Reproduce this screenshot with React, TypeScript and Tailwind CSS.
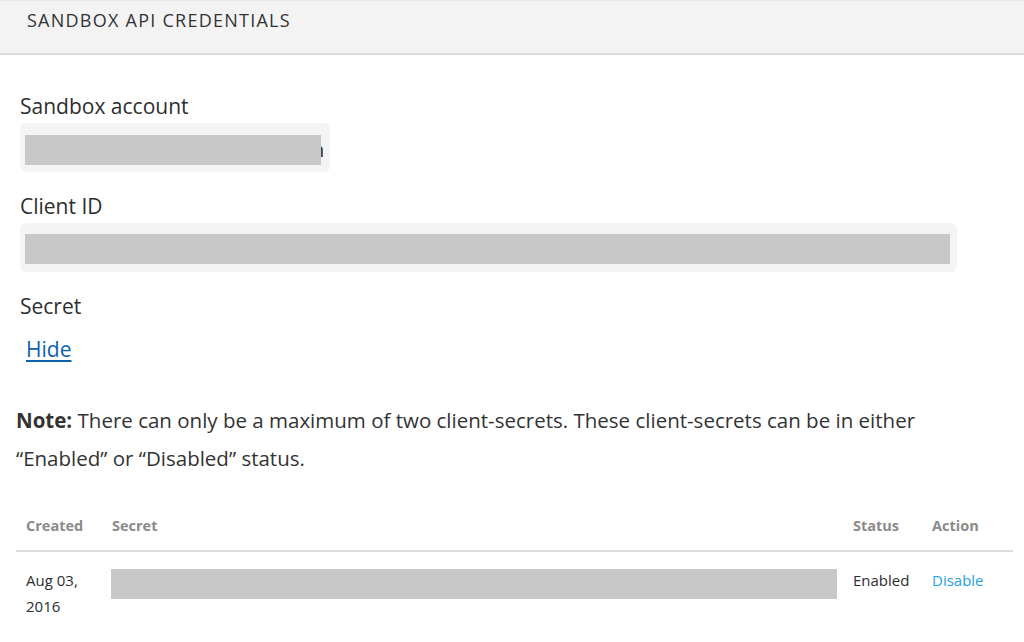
import React from "react";

export default function App() {
  const font = { fontFamily: '"Open Sans", "Liberation Sans", sans-serif' };
  return (
    <div className="w-[1024px] h-[642px] overflow-hidden bg-white text-[#2c2e2f]" style={font}>
      <div className="h-[55px] bg-[#f3f3f3] border-t border-[#e6e6e6] border-b-2 border-b-[#dcdcdc] pl-[27px] pt-[6px]">
        <div className="text-[18px] leading-[26px] text-[#333] tracking-[1.25px]">SANDBOX API CREDENTIALS</div>
      </div>
      <div className="pl-[20px] pt-[37px]">
        <div className="text-[21px] leading-[28px]">Sandbox account</div>
        <div className="mt-[3px] w-[310px] h-[49px] bg-[#f4f4f4] rounded-[6px] pl-[5px] pt-[12px] flex items-start">
          <div className="w-[296px] h-[30px] bg-[#c8c8c8]" />
          <div className="w-[3px] overflow-hidden text-[20px] leading-[30px] text-[#2c2e2f]">
            <span className="block -ml-[9px]">n</span>
          </div>
        </div>
        <div className="mt-[20px] text-[21px] leading-[28px]">Client ID</div>
        <div className="mt-[3px] w-[937px] h-[49px] bg-[#f4f4f4] rounded-[6px] pl-[5px] pt-[11px]">
          <div className="w-[925px] h-[30px] bg-[#c8c8c8]" />
        </div>
        <div className="mt-[20px] text-[21px] leading-[28px]">Secret</div>
        <div className="mt-[15px] pl-[6px] text-[21px] leading-[28px]">
          <a className="text-[#0b61b0] underline underline-offset-[3px]" href="#">Hide</a>
        </div>
      </div>
      <p className="pl-[16px] pr-[80px] mt-[38px] text-[20.5px] leading-[38px] text-[#333]">
        <b className="font-bold">Note:</b> There can only be a maximum of two client-secrets. These client-secrets can be in either “Enabled” or “Disabled” status.
      </p>
      <div className="ml-[16px] w-[997px] mt-[36px]">
        <div className="flex h-[39px] border-b-2 border-[#dcdcdc] text-[14.5px] font-bold text-[#8a8a8a] items-start pt-[2px]">
          <div className="w-[96px] pl-[10px]">Created</div>
          <div className="flex-1">Secret</div>
          <div className="w-[79px]">Status</div>
          <div className="w-[81px]">Action</div>
        </div>
        <div className="flex pt-[17px] text-[15px]">
          <div className="w-[95px] pl-[10px] leading-[26px] -mt-[2px]">Aug 03,<br />2016</div>
          <div className="flex-1 pr-[16px]">
            <div className="h-[30px] bg-[#c8c8c8]" />
          </div>
          <div className="w-[79px] leading-[26px] -mt-[2px]">Enabled</div>
          <div className="w-[81px] leading-[26px] -mt-[2px] text-[#1ea1e0]">Disable</div>
        </div>
      </div>
    </div>
  );
}
